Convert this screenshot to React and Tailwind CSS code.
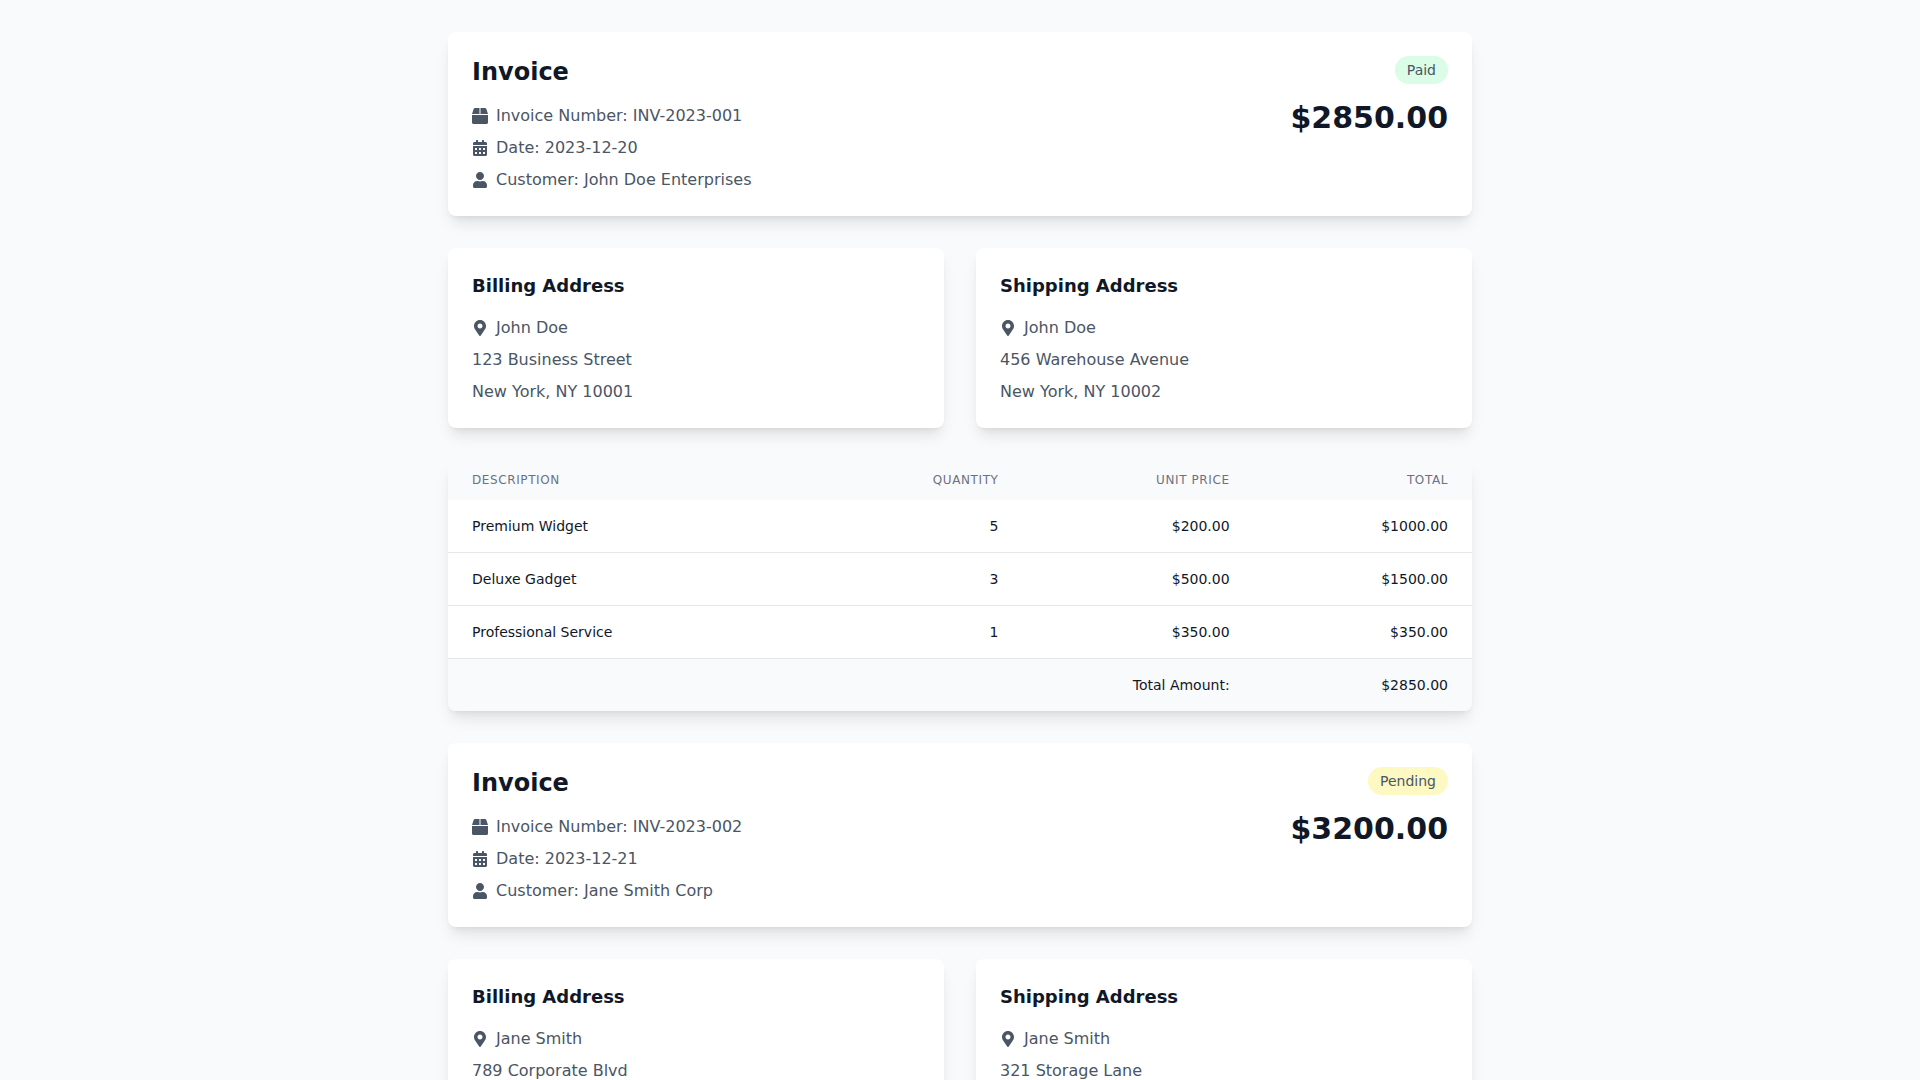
import { FaBox, FaCalendarAlt, FaUser, FaMapMarkerAlt } from "react-icons/fa"

const invoices = [
  {
    number: "INV-2023-001",
    date: "2023-12-20",
    customer: "John Doe Enterprises",
    status: "Paid",
    amount: "$2850.00",
    billing: ["John Doe", "123 Business Street", "New York, NY 10001"],
    shipping: ["John Doe", "456 Warehouse Avenue", "New York, NY 10002"],
    items: [
      { name: "Premium Widget", qty: 5, price: "$200.00", total: "$1000.00" },
      { name: "Deluxe Gadget", qty: 3, price: "$500.00", total: "$1500.00" },
      { name: "Professional Service", qty: 1, price: "$350.00", total: "$350.00" },
    ],
  },
  {
    number: "INV-2023-002",
    date: "2023-12-21",
    customer: "Jane Smith Corp",
    status: "Pending",
    amount: "$3200.00",
    billing: ["Jane Smith", "789 Corporate Blvd"],
    shipping: ["Jane Smith", "321 Storage Lane"],
    items: [],
  },
]

function MetaLine({ icon: Icon, children }) {
  return (
    <p className="flex items-center text-gray-600">
      <Icon className="w-4 h-4 mr-2 shrink-0" />
      {children}
    </p>
  )
}

function AddressCard({ title, lines }) {
  return (
    <div className="bg-white rounded-lg shadow-lg p-6">
      <h3 className="text-lg font-semibold text-gray-900 mb-4">{title}</h3>
      <div className="space-y-2 text-gray-600">
        <MetaLine icon={FaMapMarkerAlt}>{lines[0]}</MetaLine>
        {lines.slice(1).map((line) => (
          <p key={line}>{line}</p>
        ))}
      </div>
    </div>
  )
}

function ItemsTable({ items, amount }) {
  return (
    <div className="bg-white rounded-lg shadow-lg overflow-hidden">
      <table className="w-full">
        <thead className="bg-gray-50">
          <tr>
            <th className="px-6 py-3 text-left text-xs font-medium text-gray-500 uppercase tracking-wider">Description</th>
            <th className="px-6 py-3 text-right text-xs font-medium text-gray-500 uppercase tracking-wider">Quantity</th>
            <th className="px-6 py-3 text-right text-xs font-medium text-gray-500 uppercase tracking-wider">Unit Price</th>
            <th className="px-6 py-3 text-right text-xs font-medium text-gray-500 uppercase tracking-wider">Total</th>
          </tr>
        </thead>
        <tbody className="divide-y divide-gray-200 text-sm text-gray-900">
          {items.map((item) => (
            <tr key={item.name}>
              <td className="px-6 py-4">{item.name}</td>
              <td className="px-6 py-4 text-right">{item.qty}</td>
              <td className="px-6 py-4 text-right">{item.price}</td>
              <td className="px-6 py-4 text-right">{item.total}</td>
            </tr>
          ))}
        </tbody>
        <tfoot className="bg-gray-50 border-t border-gray-200 text-sm text-gray-900">
          <tr>
            <td colSpan="3" className="px-6 py-4 text-right">Total Amount:</td>
            <td className="px-6 py-4 text-right">{amount}</td>
          </tr>
        </tfoot>
      </table>
    </div>
  )
}

function Invoice({ invoice }) {
  const badge = invoice.status === "Paid" ? "bg-green-100" : "bg-yellow-100"

  return (
    <div className="space-y-8">
      <div className="bg-white rounded-lg shadow-lg p-6 flex justify-between items-start">
        <div>
          <h1 className="text-2xl font-bold text-gray-900 mb-4">Invoice</h1>
          <div className="space-y-2">
            <MetaLine icon={FaBox}>Invoice Number: {invoice.number}</MetaLine>
            <MetaLine icon={FaCalendarAlt}>Date: {invoice.date}</MetaLine>
            <MetaLine icon={FaUser}>Customer: {invoice.customer}</MetaLine>
          </div>
        </div>
        <div className="flex flex-col items-end">
          <span className={`px-3 py-1 rounded-full text-sm text-gray-600 ${badge}`}>{invoice.status}</span>
          <p className="text-3xl font-bold text-gray-900 mt-4">{invoice.amount}</p>
        </div>
      </div>
      <div className="grid grid-cols-2 gap-8">
        <AddressCard title="Billing Address" lines={invoice.billing} />
        <AddressCard title="Shipping Address" lines={invoice.shipping} />
      </div>
      {invoice.items.length > 0 && <ItemsTable items={invoice.items} amount={invoice.amount} />}
    </div>
  )
}

export default function App() {
  return (
    <div className="h-screen overflow-hidden bg-gray-50 font-['DejaVu_Sans',sans-serif]">
      <div className="max-w-5xl mx-auto py-8 space-y-8">
        {invoices.map((invoice) => (
          <Invoice key={invoice.number} invoice={invoice} />
        ))}
      </div>
    </div>
  )
}
